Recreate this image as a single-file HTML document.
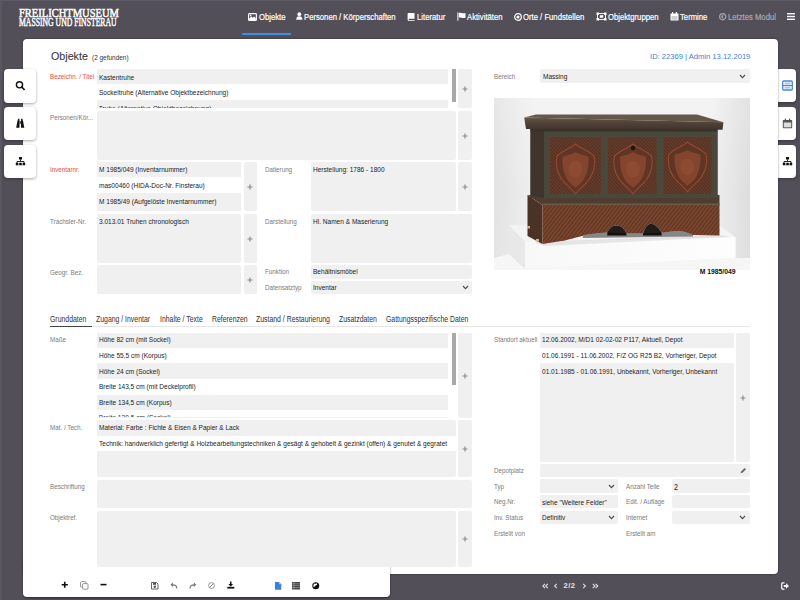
<!DOCTYPE html>
<html><head><meta charset="utf-8"><title>Objekte</title>
<style>
html,body{margin:0;padding:0;}
body{width:800px;height:600px;position:relative;overflow:hidden;background:#524f59;font-family:"Liberation Sans", sans-serif;}
.t{position:absolute;white-space:nowrap;font-family:"Liberation Sans", sans-serif;}
.r{position:absolute;}
svg.r{overflow:visible}
</style></head><body>
<div class="r" style="left:0px;top:0px;width:1.6px;height:600px;background:#5a5761;"></div>
<div class="r" style="left:0px;top:0px;width:800px;height:0.8px;background:#5c5a64;"></div>
<div class="t" style="left:19.3px;top:6.7px;font-family:'Liberation Serif',serif;font-size:12.3px;line-height:12.3px;color:#fff;-webkit-text-stroke:0.5px #fff;transform:scaleX(0.855);transform-origin:0 0;white-space:nowrap">FREILICHTMUSEUM</div>
<div class="t" style="left:19.3px;top:16.4px;font-family:'Liberation Serif',serif;font-size:12.4px;line-height:12.4px;color:#fff;-webkit-text-stroke:0.5px #fff;transform:scaleX(0.622);transform-origin:0 0;white-space:nowrap">MASSING UND FINSTERAU</div>
<div class="t" style="left:258.50px;top:12.63px;font-size:8.47px;line-height:8.47px;color:#fff;font-weight:normal;transform:scaleX(0.9091);transform-origin:0 0;-webkit-text-stroke:0.2px #fff">Objekte</div>
<div class="t" style="left:304.30px;top:12.63px;font-size:8.47px;line-height:8.47px;color:#fff;font-weight:normal;transform:scaleX(0.9091);transform-origin:0 0;-webkit-text-stroke:0.2px #fff">Personen / Körperschaften</div>
<div class="t" style="left:416.50px;top:12.63px;font-size:8.47px;line-height:8.47px;color:#fff;font-weight:normal;transform:scaleX(0.9091);transform-origin:0 0;-webkit-text-stroke:0.2px #fff">Literatur</div>
<div class="t" style="left:466.80px;top:12.63px;font-size:8.47px;line-height:8.47px;color:#fff;font-weight:normal;transform:scaleX(0.9091);transform-origin:0 0;-webkit-text-stroke:0.2px #fff">Aktivitäten</div>
<div class="t" style="left:523.20px;top:12.63px;font-size:8.47px;line-height:8.47px;color:#fff;font-weight:normal;transform:scaleX(0.9091);transform-origin:0 0;-webkit-text-stroke:0.2px #fff">Orte / Fundstellen</div>
<div class="t" style="left:607.80px;top:12.63px;font-size:8.47px;line-height:8.47px;color:#fff;font-weight:normal;transform:scaleX(0.9091);transform-origin:0 0;-webkit-text-stroke:0.2px #fff">Objektgruppen</div>
<div class="t" style="left:679.60px;top:12.63px;font-size:8.47px;line-height:8.47px;color:#fff;font-weight:normal;transform:scaleX(0.9091);transform-origin:0 0;-webkit-text-stroke:0.2px #fff">Termine</div>
<div class="t" style="left:727.90px;top:12.63px;font-size:8.47px;line-height:8.47px;color:#a9a8ad;font-weight:normal;transform:scaleX(0.9091);transform-origin:0 0;-webkit-text-stroke:0.2px #a9a8ad">Letztes Modul</div>
<div class="r" style="left:242px;top:33px;width:49px;height:2px;background:#3d8ee0;"></div>
<svg class="r" style="left:247.5px;top:12.6px;" width="9" height="8" viewBox="0 0 9 8"><rect x="0.6" y="0.6" width="7.8" height="6.9" rx="0.8" fill="#524f59" stroke="#fff" stroke-width="1.1"/><path d="M1.2 7 L1.2 5.5 L3.2 3.3 L4.8 4.8 L6.2 3.6 L7.8 5 L7.8 7 Z" fill="#fff"/><circle cx="2.6" cy="2.4" r="0.8" fill="#fff"/></svg>
<svg class="r" style="left:296px;top:12.3px;" width="7" height="8" viewBox="0 0 7 8"><circle cx="3.3" cy="2.2" r="1.9" fill="#fff"/><path d="M0.2 7.8 C0.2 4.9 1.4 4.2 3.3 4.2 C5.2 4.2 6.4 4.9 6.4 7.8 Z" fill="#fff"/></svg>
<svg class="r" style="left:406.5px;top:12px;" width="8" height="9" viewBox="0 0 8 9"><path d="M1.5 1 H7.5 V6.8 H2.2 C1.4 6.8 1.4 8 2.2 8 H7.5 V8.8 H1.8 C0.8 8.8 0.6 8 0.6 7.5 V2 C0.6 1.4 1 1 1.5 1Z" fill="#fff"/></svg>
<svg class="r" style="left:456.5px;top:12px;" width="9" height="9" viewBox="0 0 9 9"><rect x="0.4" y="0.5" width="1" height="8.3" fill="#fff"/><path d="M1.8 1 C3.5 0 5 2 8.5 1 V5.8 C5 6.8 3.5 4.8 1.8 5.8 Z" fill="#fff"/></svg>
<svg class="r" style="left:514px;top:12.5px;" width="8" height="8" viewBox="0 0 8 8"><circle cx="4" cy="4" r="3.3" fill="none" stroke="#fff" stroke-width="1.2"/><circle cx="4" cy="4" r="1.6" fill="#fff"/></svg>
<svg class="r" style="left:596px;top:12px;" width="11" height="9" viewBox="0 0 11 9"><rect x="0.5" y="0.5" width="2.5" height="2.5" fill="#fff"/><rect x="8" y="0.5" width="2.5" height="2.5" fill="#fff"/><rect x="0.5" y="6" width="2.5" height="2.5" fill="#fff"/><rect x="8" y="6" width="2.5" height="2.5" fill="#fff"/><rect x="1.5" y="1.5" width="8" height="6" fill="none" stroke="#fff" stroke-width="0.9"/><rect x="3.8" y="3.2" width="3.4" height="2.6" fill="#fff"/></svg>
<svg class="r" style="left:669.5px;top:12px;" width="9" height="9" viewBox="0 0 9 9"><rect x="0.5" y="1.5" width="8" height="7" fill="#fff"/><rect x="1.5" y="4" width="6" height="3.8" fill="#cfcfcf"/><rect x="2" y="0" width="1.2" height="2.5" fill="#fff"/><rect x="5.8" y="0" width="1.2" height="2.5" fill="#fff"/></svg>
<svg class="r" style="left:719px;top:12.7px;" width="8" height="8" viewBox="0 0 8 8"><circle cx="3.7" cy="3.7" r="3.1" fill="none" stroke="#a9a8ad" stroke-width="1.2"/><path d="M4.3 2.1 L2.7 3.7 L4.3 5.3" fill="none" stroke="#a9a8ad" stroke-width="1.2"/></svg>
<svg class="r" style="left:786.6px;top:13.2px;" width="8" height="8" viewBox="0 0 8 8"><rect x="0" y="0" width="7.9" height="1.4" fill="#fff"/><rect x="0" y="2.8" width="7.9" height="1.4" fill="#fff"/><rect x="0" y="5.6" width="7.9" height="1.4" fill="#fff"/></svg>
<div class="r" style="left:770px;top:69px;width:26px;height:33px;background:#fff;border-radius:4px;box-shadow:0 1px 3px rgba(0,0,0,0.35)"></div>
<div class="r" style="left:770px;top:107px;width:26px;height:33px;background:#fff;border-radius:4px;box-shadow:0 1px 3px rgba(0,0,0,0.35)"></div>
<div class="r" style="left:770px;top:145px;width:26px;height:33px;background:#fff;border-radius:4px;box-shadow:0 1px 3px rgba(0,0,0,0.35)"></div>
<div class="r" style="left:22.5px;top:39.3px;width:755.7px;height:535.0px;background:#fff;border-radius:4px;box-shadow:0 0 2px rgba(0,0,0,0.5)"></div>
<div class="r" style="left:22.5px;top:560px;width:367.5px;height:36.60000000000002px;background:#fff;border-radius:0 0 4px 4px;box-shadow:0 1px 2px rgba(0,0,0,0.5)"></div>
<div class="r" style="left:22.5px;top:555px;width:367.5px;height:20px;background:#fff;"></div>
<div class="r" style="left:4.2px;top:69px;width:32.199999999999996px;height:33.599999999999994px;background:#fff;border-radius:4px;box-shadow:0 1px 3px rgba(0,0,0,0.35)"></div>
<div class="r" style="left:4.2px;top:106.8px;width:32.199999999999996px;height:33.60000000000001px;background:#fff;border-radius:4px;box-shadow:0 1px 3px rgba(0,0,0,0.35)"></div>
<div class="r" style="left:4.2px;top:144.7px;width:32.199999999999996px;height:33.60000000000002px;background:#fff;border-radius:4px;box-shadow:0 1px 3px rgba(0,0,0,0.35)"></div>
<svg class="r" style="left:15px;top:80px;" width="11" height="11" viewBox="0 0 11 11"><circle cx="4.5" cy="4.8" r="3.1" fill="none" stroke="#111" stroke-width="1.4"/><path d="M6.8 7.1 L9.2 9.5" stroke="#111" stroke-width="1.6" stroke-linecap="round"/></svg>
<svg class="r" style="left:15px;top:118px;" width="11" height="11" viewBox="0 0 11 11"><path d="M1.2 9.8 L4.5 9.8 L4.5 2.3 L2.6 2.3 Z M6 9.8 L9.3 9.8 L7.9 2.3 L6 2.3 Z" fill="#111"/><rect x="2.9" y="0.8" width="1.6" height="1.8" fill="#222"/><rect x="6" y="0.8" width="1.6" height="1.8" fill="#222"/><rect x="4.4" y="3.2" width="1.7" height="2.6" fill="#444"/></svg>
<svg class="r" style="left:15px;top:156px;" width="11" height="11" viewBox="0 0 11 11"><rect x="4" y="1" width="3" height="2.5" fill="#111"/><path d="M5.5 3.5 V5.5 M2 7 V5.5 H9 V7" fill="none" stroke="#111" stroke-width="0.9"/><rect x="0.8" y="6.8" width="2.6" height="2.5" fill="#111"/><rect x="4.2" y="6.8" width="2.6" height="2.5" fill="#111"/><rect x="7.6" y="6.8" width="2.6" height="2.5" fill="#111"/></svg>
<svg class="r" style="left:782px;top:80px;" width="11" height="11" viewBox="0 0 11 11"><rect x="0.7" y="1" width="9.6" height="9" rx="1" fill="none" stroke="#4a86d4" stroke-width="1.3"/><rect x="0.7" y="5" width="9.6" height="1.1" fill="#4a86d4"/><rect x="2.5" y="2.5" width="6" height="2" fill="#a9c6ee"/><rect x="2.5" y="6.6" width="6" height="2" fill="#a9c6ee"/></svg>
<svg class="r" style="left:782px;top:118px;" width="11" height="11" viewBox="0 0 11 11"><rect x="0.8" y="2" width="9.4" height="8.3" rx="0.8" fill="#555"/><rect x="1.8" y="4.5" width="7.4" height="4.8" fill="#ddd"/><rect x="2.8" y="0.5" width="1.2" height="2.6" fill="#555"/><rect x="7" y="0.5" width="1.2" height="2.6" fill="#555"/></svg>
<svg class="r" style="left:782px;top:156px;" width="11" height="11" viewBox="0 0 11 11"><rect x="4" y="1" width="3" height="2.5" fill="#111"/><path d="M5.5 3.5 V5.5 M2 7 V5.5 H9 V7" fill="none" stroke="#111" stroke-width="0.9"/><rect x="0.8" y="6.8" width="2.6" height="2.5" fill="#111"/><rect x="4.2" y="6.8" width="2.6" height="2.5" fill="#111"/><rect x="7.6" y="6.8" width="2.6" height="2.5" fill="#111"/></svg>
<div class="t" style="left:50.60px;top:50.88px;font-size:11.13px;line-height:11.13px;color:#383838;font-weight:normal;transform:scaleX(0.9615);transform-origin:0 0;-webkit-text-stroke:0.1px #383838">Objekte</div>
<div class="t" style="left:91.90px;top:53.90px;font-size:7.68px;line-height:7.68px;color:#333;font-weight:normal;transform:scaleX(0.8403);transform-origin:0 0;">(2 gefunden)</div>
<div class="t" style="right:49.80px;top:53.38px;font-size:8.06px;line-height:8.06px;color:#3d7fd6;font-weight:normal;transform:scaleX(0.9434);transform-origin:100% 0;">ID: 22369 | Admin 13.12.2019</div>
<div class="t" style="left:50.25px;top:72.95px;font-size:7.44px;line-height:7.44px;color:#f0493e;font-weight:normal;transform:scaleX(0.8403);transform-origin:0 0;">Bezeichn. / Titel</div>
<div class="r" style="left:96.5px;top:69px;width:351.5px;height:15px;background:#f0f0f0;"></div>
<div class="r" style="left:96.5px;top:100px;width:351.5px;height:8px;background:#f0f0f0;"></div>
<div class="t" style="left:98.75px;top:73.65px;font-size:7.79px;line-height:7.79px;color:#222222;font-weight:normal;transform:scaleX(0.8403);transform-origin:0 0;">Kastentruhe</div>
<div class="t" style="left:98.75px;top:89.40px;font-size:7.79px;line-height:7.79px;color:#222222;font-weight:normal;transform:scaleX(0.8403);transform-origin:0 0;">Sockeltruhe (Alternative Objektbezeichnung)</div>
<div class="r" style="left:96.5px;top:100px;width:352px;height:8px;overflow:hidden"><div class="t" style="left:2.25px;top:5.6px;font-size:6.6px;line-height:6.6px;color:#333">Truhe (Alternative Objektbezeichnung)</div></div>
<div class="r" style="left:452px;top:69px;width:4px;height:33px;background:#a8a8a8;"></div>
<div class="r" style="left:458px;top:69px;width:14px;height:39px;background:#f0f0f0;border-radius:2px"></div>
<svg class="r" style="left:462px;top:85.5px;" width="6" height="6" viewBox="0 0 6 6"><path d="M3 0.5 V5.5 M0.5 3 H5.5" stroke="#8a8a8a" stroke-width="1.15"/></svg>
<div class="t" style="left:50.25px;top:114.20px;font-size:7.44px;line-height:7.44px;color:#7a7a7a;font-weight:normal;transform:scaleX(0.8403);transform-origin:0 0;">Personen/Kör...</div>
<div class="r" style="left:96.5px;top:110.5px;width:359.5px;height:49.5px;background:#f0f0f0;border-radius:2px"></div>
<div class="r" style="left:458px;top:110.5px;width:14px;height:49.5px;background:#f0f0f0;border-radius:2px"></div>
<svg class="r" style="left:462px;top:132.5px;" width="6" height="6" viewBox="0 0 6 6"><path d="M3 0.5 V5.5 M0.5 3 H5.5" stroke="#8a8a8a" stroke-width="1.15"/></svg>
<div class="t" style="left:50.25px;top:165.90px;font-size:7.44px;line-height:7.44px;color:#f0493e;font-weight:normal;transform:scaleX(0.8403);transform-origin:0 0;">Inventarnr.</div>
<div class="r" style="left:96.5px;top:162px;width:144.5px;height:15px;background:#f0f0f0;"></div>
<div class="r" style="left:96.5px;top:193px;width:144.5px;height:18px;background:#f0f0f0;"></div>
<div class="t" style="left:98.75px;top:166.40px;font-size:7.79px;line-height:7.79px;color:#222222;font-weight:normal;transform:scaleX(0.8403);transform-origin:0 0;">M 1985/049 (Inventarnummer)</div>
<div class="t" style="left:98.75px;top:182.10px;font-size:7.79px;line-height:7.79px;color:#222222;font-weight:normal;transform:scaleX(0.8403);transform-origin:0 0;">mas00460 (HIDA-Doc-Nr. Finsterau)</div>
<div class="t" style="left:98.75px;top:197.80px;font-size:7.79px;line-height:7.79px;color:#222222;font-weight:normal;transform:scaleX(0.8403);transform-origin:0 0;">M 1985/49 (Aufgelöste Inventarnummer)</div>
<div class="r" style="left:243.5px;top:162px;width:13.5px;height:49px;background:#f0f0f0;border-radius:2px"></div>
<svg class="r" style="left:247px;top:183.5px;" width="6" height="6" viewBox="0 0 6 6"><path d="M3 0.5 V5.5 M0.5 3 H5.5" stroke="#8a8a8a" stroke-width="1.15"/></svg>
<div class="t" style="left:50.25px;top:217.70px;font-size:7.44px;line-height:7.44px;color:#7a7a7a;font-weight:normal;transform:scaleX(0.8403);transform-origin:0 0;">Trachsler-Nr.</div>
<div class="r" style="left:96.5px;top:213.75px;width:144.5px;height:49.25px;background:#f0f0f0;border-radius:2px"></div>
<div class="t" style="left:98.75px;top:218.40px;font-size:7.79px;line-height:7.79px;color:#222222;font-weight:normal;transform:scaleX(0.8403);transform-origin:0 0;">3.013.01 Truhen chronologisch</div>
<div class="r" style="left:243.5px;top:213.75px;width:13.5px;height:49.25px;background:#f0f0f0;border-radius:2px"></div>
<svg class="r" style="left:247px;top:235.5px;" width="6" height="6" viewBox="0 0 6 6"><path d="M3 0.5 V5.5 M0.5 3 H5.5" stroke="#8a8a8a" stroke-width="1.15"/></svg>
<div class="t" style="left:50.25px;top:268.70px;font-size:7.44px;line-height:7.44px;color:#7a7a7a;font-weight:normal;transform:scaleX(0.8403);transform-origin:0 0;">Geogr. Bez.</div>
<div class="r" style="left:96.5px;top:265px;width:144.5px;height:29px;background:#f0f0f0;border-radius:2px"></div>
<div class="r" style="left:243.5px;top:265px;width:13.5px;height:29px;background:#f0f0f0;border-radius:2px"></div>
<svg class="r" style="left:247px;top:276.5px;" width="6" height="6" viewBox="0 0 6 6"><path d="M3 0.5 V5.5 M0.5 3 H5.5" stroke="#8a8a8a" stroke-width="1.15"/></svg>
<div class="t" style="left:265.00px;top:166.20px;font-size:7.44px;line-height:7.44px;color:#7a7a7a;font-weight:normal;transform:scaleX(0.8403);transform-origin:0 0;">Datierung</div>
<div class="r" style="left:311px;top:162px;width:145px;height:49px;background:#f0f0f0;border-radius:2px"></div>
<div class="t" style="left:313.40px;top:166.40px;font-size:7.79px;line-height:7.79px;color:#222222;font-weight:normal;transform:scaleX(0.8403);transform-origin:0 0;">Herstellung: 1786 - 1800</div>
<div class="r" style="left:458px;top:162px;width:14px;height:49px;background:#f0f0f0;border-radius:2px"></div>
<svg class="r" style="left:462px;top:183.5px;" width="6" height="6" viewBox="0 0 6 6"><path d="M3 0.5 V5.5 M0.5 3 H5.5" stroke="#8a8a8a" stroke-width="1.15"/></svg>
<div class="t" style="left:265.00px;top:217.70px;font-size:7.44px;line-height:7.44px;color:#7a7a7a;font-weight:normal;transform:scaleX(0.8403);transform-origin:0 0;">Darstellung</div>
<div class="r" style="left:311px;top:213.75px;width:161px;height:49.25px;background:#f0f0f0;border-radius:2px"></div>
<div class="t" style="left:313.40px;top:218.40px;font-size:7.79px;line-height:7.79px;color:#222222;font-weight:normal;transform:scaleX(0.8403);transform-origin:0 0;">Hl. Namen &amp; Maserierung</div>
<div class="t" style="left:265.00px;top:268.20px;font-size:7.44px;line-height:7.44px;color:#7a7a7a;font-weight:normal;transform:scaleX(0.8403);transform-origin:0 0;">Funktion</div>
<div class="r" style="left:311px;top:265px;width:161px;height:13.75px;background:#f0f0f0;border-radius:2px"></div>
<div class="t" style="left:313.40px;top:268.40px;font-size:7.79px;line-height:7.79px;color:#222222;font-weight:normal;transform:scaleX(0.8403);transform-origin:0 0;">Behältnismöbel</div>
<div class="t" style="left:265.00px;top:283.70px;font-size:7.44px;line-height:7.44px;color:#7a7a7a;font-weight:normal;transform:scaleX(0.8403);transform-origin:0 0;">Datensatztyp</div>
<div class="r" style="left:311px;top:281px;width:161px;height:13px;background:#f0f0f0;border-radius:2px"></div>
<div class="t" style="left:313.40px;top:283.90px;font-size:7.79px;line-height:7.79px;color:#222222;font-weight:normal;transform:scaleX(0.8403);transform-origin:0 0;">Inventar</div>
<svg class="r" style="left:461.5px;top:285.0px;" width="7" height="5" viewBox="0 0 7 5"><path d="M1 1 L3.5 3.6 L6 1" fill="none" stroke="#4a4a4a" stroke-width="1.1"/></svg>
<div class="t" style="left:494.00px;top:72.50px;font-size:7.44px;line-height:7.44px;color:#7a7a7a;font-weight:normal;transform:scaleX(0.8403);transform-origin:0 0;">Bereich</div>
<div class="r" style="left:540.3px;top:69px;width:209.70000000000005px;height:13.5px;background:#f0f0f0;border-radius:2px"></div>
<div class="t" style="left:542.50px;top:72.70px;font-size:7.79px;line-height:7.79px;color:#222222;font-weight:normal;transform:scaleX(0.8403);transform-origin:0 0;">Massing</div>
<svg class="r" style="left:739.0px;top:73.5px;" width="7" height="5" viewBox="0 0 7 5"><path d="M1 1 L3.5 3.6 L6 1" fill="none" stroke="#4a4a4a" stroke-width="1.1"/></svg>
<svg class="r" style="left:494px;top:98px" width="256" height="172" viewBox="0 0 256 172">
<defs>
<linearGradient id="pbg" x1="0" y1="0" x2="0" y2="1">
<stop offset="0" stop-color="#f3f3f3"/><stop offset="0.55" stop-color="#eeeeee"/><stop offset="1" stop-color="#f0f0f0"/>
</linearGradient>
<linearGradient id="pbgx" x1="0" y1="0" x2="1" y2="0">
<stop offset="0" stop-color="#000" stop-opacity="0.05"/><stop offset="0.15" stop-color="#000" stop-opacity="0"/><stop offset="0.85" stop-color="#000" stop-opacity="0"/><stop offset="1" stop-color="#000" stop-opacity="0.07"/>
</linearGradient>
<pattern id="streak" width="3" height="3" patternUnits="userSpaceOnUse" patternTransform="rotate(38)">
<rect width="3" height="3" fill="#7c452d"/><rect width="1.1" height="3" fill="#5c3424"/>
</pattern>
<pattern id="streak2" width="2.4" height="2.4" patternUnits="userSpaceOnUse" patternTransform="rotate(-42)">
<rect width="2.4" height="2.4" fill="#653b2b"/><rect width="0.9" height="2.4" fill="#513023"/>
</pattern>
<linearGradient id="lidf" x1="0" y1="0" x2="0" y2="1"><stop offset="0" stop-color="#6b5a4c"/><stop offset="0.35" stop-color="#54453a"/><stop offset="1" stop-color="#3e332b"/></linearGradient>
<linearGradient id="plat" x1="0" y1="0" x2="1" y2="0"><stop offset="0" stop-color="#f8f8f8"/><stop offset="1" stop-color="#fdfdfd"/></linearGradient>
</defs>
<rect width="256" height="172" fill="url(#pbg)"/>
<rect width="256" height="172" fill="url(#pbgx)"/>
<!-- platform -->
<path d="M14.7 127.3 L226 128 L241.6 139 L31 144 Z" fill="#f4f4f4"/>
<path d="M14.7 127.3 L31 144 L31 171 L14.7 156 Z" fill="#e8e8e8"/>
<path d="M31 144 L241.6 139 L241.6 160 L31 171 Z" fill="url(#plat)"/>
<path d="M31 171 L241.6 160 L256 160 L256 172 L0 172 L0 160 L14.7 156 Z" fill="#f6f6f6"/>
<!-- base shadow -->
<path d="M40 144 L225 137 L236 139 L50 148 Z" fill="#000" fill-opacity="0.08"/>
<!-- base side -->
<path d="M33.5 97 L48.5 107 L48.5 146 L33.5 138 Z" fill="#4a3326"/>
<!-- base front -->
<path d="M48.5 106 L225.5 106 L225.5 137.5 L199 137 C193 134 186 132 178 133.6 C173 134 170 135 167.6 134.5 C165 130 161 125.7 157 125.7 C153 125.7 151 130 149 135.4 L132.5 135.4 C130 130 127 127.5 122 127.5 C118 127.5 115 131 113.3 134.5 C105 135 95 136 88.8 137.7 C80 140 70 143 66 143.3 L48.5 146 Z" fill="url(#streak)"/>
<path d="M113.3 134.5 C115 131 118 127.5 122 127.5 C127 127.5 130 130 132.5 135.4 L132.5 137.5 L113.3 137.5 Z M149 135.4 C151 130 153 125.7 157 125.7 C161 125.7 165 130 167.6 134.5 L167.6 137.5 L149 137.5 Z" fill="#221d1a"/><path d="M88.8 137.7 C95 136 105 135 113.3 134.5 L132.5 135.4 L149 135.4 L167.6 134.5 C170 135 173 134 178 133.6 C186 132 193 134 199 137 L199 138.5 L88.8 140 Z" fill="#000" fill-opacity="0.45"/>
<path d="M33.5 97 L225.5 97 L225.5 107 L48.5 107 Z" fill="#4f3e30"/><rect x="48.5" y="105.5" width="177" height="1.5" fill="#6a5a48"/>
<!-- body -->
<rect x="36.5" y="31" width="187" height="69" fill="#463c32"/>
<path d="M36.5 31 L50 33 L50 100 L36.5 97 Z" fill="#3f352c"/>
<rect x="50" y="33" width="173.5" height="67" fill="#49483a"/>
<rect x="56" y="39" width="51" height="57" fill="url(#streak2)"/>
<rect x="114" y="39" width="48.7" height="57" fill="url(#streak2)"/>
<rect x="169.5" y="39" width="48" height="57" fill="url(#streak2)"/>
<!-- ornaments -->
<g>
<path d="M81.5 46 C76 51 69 52 63 58 C61 66 63 76 70 84 C74 88 78 91 81.5 96 C85 91 89 88 93 84 C100 76 102 66 100 58 C94 52 87 51 81.5 46 Z" fill="#5f3526" stroke="#95492c" stroke-width="1.1"/>
<path d="M81.5 54 C77 57 72 57 68.5 59 C68 68 70 78 75 84 C78 87 80 88 81.5 90 C83 88 85 87 88 84 C93 78 95 68 94.5 59 C91 57 86 57 81.5 54 Z" fill="#84442d"/>
<ellipse cx="81.5" cy="71" rx="7" ry="8.5" fill="#8d4b31"/>
</g><g transform="translate(57.5,0)">
<path d="M81.5 46 C76 51 69 52 63 58 C61 66 63 76 70 84 C74 88 78 91 81.5 96 C85 91 89 88 93 84 C100 76 102 66 100 58 C94 52 87 51 81.5 46 Z" fill="#5f3526" stroke="#95492c" stroke-width="1.1"/>
<path d="M81.5 54 C77 57 72 57 68.5 59 C68 68 70 78 75 84 C78 87 80 88 81.5 90 C83 88 85 87 88 84 C93 78 95 68 94.5 59 C91 57 86 57 81.5 54 Z" fill="#84442d"/>
<ellipse cx="81.5" cy="71" rx="7" ry="8.5" fill="#8d4b31"/>
</g><g transform="translate(112,-2)">
<path d="M81.5 46 C76 51 69 52 63 58 C61 66 63 76 70 84 C74 88 78 91 81.5 96 C85 91 89 88 93 84 C100 76 102 66 100 58 C94 52 87 51 81.5 46 Z" fill="#5f3526" stroke="#95492c" stroke-width="1.1"/>
<path d="M81.5 54 C77 57 72 57 68.5 59 C68 68 70 78 75 84 C78 87 80 88 81.5 90 C83 88 85 87 88 84 C93 78 95 68 94.5 59 C91 57 86 57 81.5 54 Z" fill="#84442d"/>
<ellipse cx="81.5" cy="71" rx="7" ry="8.5" fill="#8d4b31"/>
</g>
<circle cx="139" cy="50" r="2.3" fill="#1a1614"/>
<!-- under-lid band -->
<rect x="36.5" y="30.5" width="187" height="3" fill="#3a3129"/>
<!-- lid -->
<path d="M30.2 19.5 L42 16.5 L203 16.5 L229.5 24.2 Z" fill="#66574b"/>
<path d="M30.2 19.5 L229.5 24.2 L228.5 31.8 L32 31 Z" fill="url(#lidf)"/>
<!-- feet -->
<rect x="33" y="128" width="3" height="2.5" fill="#cdb38e"/>
<rect x="42" y="141" width="3" height="2.5" fill="#cdb38e"/>
</svg>

<div class="r" style="left:50px;top:326px;width:700px;height:1px;background:#e6e6e6;"></div>
<div class="r" style="left:50px;top:325.8px;width:42px;height:1.5px;background:#444;"></div>
<div class="t" style="left:50.00px;top:316.05px;font-size:8.21px;line-height:8.21px;color:#333;font-weight:normal;transform:scaleX(0.8403);transform-origin:0 0;">Grunddaten</div>
<div class="t" style="left:96.00px;top:316.05px;font-size:8.21px;line-height:8.21px;color:#333;font-weight:normal;transform:scaleX(0.8403);transform-origin:0 0;">Zugang / Inventar</div>
<div class="t" style="left:159.50px;top:316.05px;font-size:8.21px;line-height:8.21px;color:#333;font-weight:normal;transform:scaleX(0.8403);transform-origin:0 0;">Inhalte / Texte</div>
<div class="t" style="left:212.30px;top:316.05px;font-size:8.21px;line-height:8.21px;color:#333;font-weight:normal;transform:scaleX(0.8403);transform-origin:0 0;">Referenzen</div>
<div class="t" style="left:256.00px;top:316.05px;font-size:8.21px;line-height:8.21px;color:#333;font-weight:normal;transform:scaleX(0.8403);transform-origin:0 0;">Zustand / Restaurierung</div>
<div class="t" style="left:339.30px;top:316.05px;font-size:8.21px;line-height:8.21px;color:#333;font-weight:normal;transform:scaleX(0.8403);transform-origin:0 0;">Zusatzdaten</div>
<div class="t" style="left:386.20px;top:316.05px;font-size:8.21px;line-height:8.21px;color:#333;font-weight:normal;transform:scaleX(0.8403);transform-origin:0 0;">Gattungsspezifische Daten</div>
<div class="t" style="left:50.00px;top:335.70px;font-size:7.44px;line-height:7.44px;color:#7a7a7a;font-weight:normal;transform:scaleX(0.8403);transform-origin:0 0;">Maße</div>
<div class="r" style="left:96.5px;top:332.5px;width:351.5px;height:15.199999999999989px;background:#f0f0f0;"></div>
<div class="t" style="left:98.75px;top:336.30px;font-size:7.79px;line-height:7.79px;color:#222222;font-weight:normal;transform:scaleX(0.8403);transform-origin:0 0;">Höhe 82 cm (mit Sockel)</div>
<div class="t" style="left:98.75px;top:351.90px;font-size:7.79px;line-height:7.79px;color:#222222;font-weight:normal;transform:scaleX(0.8403);transform-origin:0 0;">Höhe 55,5 cm (Korpus)</div>
<div class="r" style="left:96.5px;top:363.3px;width:351.5px;height:15.699999999999989px;background:#f0f0f0;"></div>
<div class="t" style="left:98.75px;top:367.50px;font-size:7.79px;line-height:7.79px;color:#222222;font-weight:normal;transform:scaleX(0.8403);transform-origin:0 0;">Höhe 24 cm (Sockel)</div>
<div class="t" style="left:98.75px;top:383.10px;font-size:7.79px;line-height:7.79px;color:#222222;font-weight:normal;transform:scaleX(0.8403);transform-origin:0 0;">Breite 143,5 cm (mit Deckelprofil)</div>
<div class="r" style="left:96.5px;top:394.7px;width:351.5px;height:15.600000000000023px;background:#f0f0f0;"></div>
<div class="t" style="left:98.75px;top:398.70px;font-size:7.79px;line-height:7.79px;color:#222222;font-weight:normal;transform:scaleX(0.8403);transform-origin:0 0;">Breite 134,5 cm (Korpus)</div>
<div class="r" style="left:96.5px;top:410px;width:352px;height:7px;overflow:hidden"><div class="t" style="left:2.25px;top:4.5px;font-size:6.6px;line-height:6.6px;color:#333">Breite 120,5 cm (Sockel)</div></div>
<div class="r" style="left:96.5px;top:416.5px;width:351.5px;height:0.5px;background:#f0f0f0;"></div>
<div class="r" style="left:452px;top:332.5px;width:4px;height:52.0px;background:#a8a8a8;"></div>
<div class="r" style="left:458px;top:332.5px;width:14px;height:85.0px;background:#f0f0f0;border-radius:2px"></div>
<svg class="r" style="left:461.5px;top:373.3px;" width="6" height="6" viewBox="0 0 6 6"><path d="M3 0.5 V5.5 M0.5 3 H5.5" stroke="#8a8a8a" stroke-width="1.15"/></svg>
<div class="t" style="left:50.00px;top:423.60px;font-size:7.44px;line-height:7.44px;color:#7a7a7a;font-weight:normal;transform:scaleX(0.8403);transform-origin:0 0;">Mat. / Tech.</div>
<div class="r" style="left:96.5px;top:420.4px;width:359.5px;height:15.200000000000045px;background:#f0f0f0;border-radius:2px 2px 0 0"></div>
<div class="r" style="left:96.5px;top:451px;width:359.5px;height:26px;background:#f0f0f0;border-radius:0 0 2px 2px"></div>
<div class="t" style="left:98.60px;top:424.20px;font-size:7.79px;line-height:7.79px;color:#222222;font-weight:normal;transform:scaleX(0.8403);transform-origin:0 0;">Material: Farbe : Fichte &amp; Eisen &amp; Papier &amp; Lack</div>
<div class="t" style="left:98.60px;top:439.90px;font-size:7.79px;line-height:7.79px;color:#222222;font-weight:normal;transform:scaleX(0.8403);transform-origin:0 0;">Technik: handwerklich gefertigt &amp; Holzbearbeitungstechniken &amp; gesägt &amp; gehobelt &amp; gezinkt (offen) &amp; genutet &amp; gegratet</div>
<div class="r" style="left:458px;top:420.4px;width:14px;height:56.60000000000002px;background:#f0f0f0;border-radius:2px"></div>
<svg class="r" style="left:462px;top:445.5px;" width="6" height="6" viewBox="0 0 6 6"><path d="M3 0.5 V5.5 M0.5 3 H5.5" stroke="#8a8a8a" stroke-width="1.15"/></svg>
<div class="t" style="left:50.00px;top:482.80px;font-size:7.44px;line-height:7.44px;color:#7a7a7a;font-weight:normal;transform:scaleX(0.8403);transform-origin:0 0;">Beschriftung</div>
<div class="r" style="left:96.5px;top:479.6px;width:375.5px;height:28.599999999999966px;background:#f0f0f0;border-radius:2px"></div>
<div class="t" style="left:50.00px;top:513.80px;font-size:7.44px;line-height:7.44px;color:#7a7a7a;font-weight:normal;transform:scaleX(0.8403);transform-origin:0 0;">Objektref.</div>
<div class="r" style="left:96.5px;top:510.5px;width:359.5px;height:56.0px;background:#f0f0f0;border-radius:2px"></div>
<div class="r" style="left:458px;top:510.5px;width:14px;height:56.0px;background:#f0f0f0;border-radius:2px"></div>
<svg class="r" style="left:462px;top:535.5px;" width="6" height="6" viewBox="0 0 6 6"><path d="M3 0.5 V5.5 M0.5 3 H5.5" stroke="#8a8a8a" stroke-width="1.15"/></svg>
<div class="t" style="left:494.20px;top:335.90px;font-size:7.44px;line-height:7.44px;color:#7a7a7a;font-weight:normal;transform:scaleX(0.8403);transform-origin:0 0;">Standort aktuell</div>
<div class="r" style="left:540px;top:332.5px;width:194px;height:15.0px;background:#f0f0f0;"></div>
<div class="r" style="left:540px;top:363.3px;width:194px;height:98.39999999999998px;background:#f0f0f0;"></div>
<div class="t" style="left:541.90px;top:336.40px;font-size:7.79px;line-height:7.79px;color:#222222;font-weight:normal;transform:scaleX(0.8403);transform-origin:0 0;">12.06.2002, M/D1 02-02-02 P117, Aktuell, Depot</div>
<div class="t" style="left:541.90px;top:352.10px;font-size:7.79px;line-height:7.79px;color:#222222;font-weight:normal;transform:scaleX(0.8403);transform-origin:0 0;">01.06.1991 - 11.06.2002, F/Z OG R25 B2, Vorheriger, Depot</div>
<div class="t" style="left:541.90px;top:367.90px;font-size:7.79px;line-height:7.79px;color:#222222;font-weight:normal;transform:scaleX(0.8403);transform-origin:0 0;">01.01.1985 - 01.06.1991, Unbekannt, Vorheriger, Unbekannt</div>
<div class="r" style="left:736px;top:332.5px;width:14px;height:129.2px;background:#f0f0f0;border-radius:2px"></div>
<svg class="r" style="left:740px;top:394.5px;" width="6" height="6" viewBox="0 0 6 6"><path d="M3 0.5 V5.5 M0.5 3 H5.5" stroke="#8a8a8a" stroke-width="1.15"/></svg>
<div class="t" style="left:494.00px;top:467.40px;font-size:7.44px;line-height:7.44px;color:#7a7a7a;font-weight:normal;transform:scaleX(0.8403);transform-origin:0 0;">Depotplatz</div>
<div class="r" style="left:540.3px;top:464px;width:209.70000000000005px;height:13.199999999999989px;background:#f0f0f0;border-radius:2px"></div>
<svg class="r" style="left:739.5px;top:466.8px;" width="7" height="7" viewBox="0 0 7 7"><path d="M0.6 6.2 L1.1 4.4 L4.6 0.9 L6 2.3 L2.5 5.8 Z" fill="#666"/></svg>
<div class="t" style="left:494.00px;top:483.00px;font-size:7.44px;line-height:7.44px;color:#7a7a7a;font-weight:normal;transform:scaleX(0.8403);transform-origin:0 0;">Typ</div>
<div class="t" style="left:494.00px;top:498.40px;font-size:7.44px;line-height:7.44px;color:#7a7a7a;font-weight:normal;transform:scaleX(0.8403);transform-origin:0 0;">Neg.Nr.</div>
<div class="t" style="left:494.00px;top:513.90px;font-size:7.44px;line-height:7.44px;color:#7a7a7a;font-weight:normal;transform:scaleX(0.8403);transform-origin:0 0;">Inv. Status</div>
<div class="t" style="left:494.00px;top:529.50px;font-size:7.44px;line-height:7.44px;color:#7a7a7a;font-weight:normal;transform:scaleX(0.8403);transform-origin:0 0;">Erstellt von</div>
<div class="r" style="left:540.3px;top:479.4px;width:77.90000000000009px;height:13.200000000000045px;background:#f0f0f0;border-radius:2px"></div>
<div class="r" style="left:671.7px;top:479.4px;width:78.29999999999995px;height:13.200000000000045px;background:#f0f0f0;border-radius:2px"></div>
<div class="r" style="left:540.3px;top:495px;width:77.90000000000009px;height:13.199999999999989px;background:#f0f0f0;border-radius:2px"></div>
<div class="r" style="left:671.7px;top:495px;width:78.29999999999995px;height:13.199999999999989px;background:#f0f0f0;border-radius:2px"></div>
<div class="r" style="left:540.3px;top:510.7px;width:77.90000000000009px;height:13.199999999999989px;background:#f0f0f0;border-radius:2px"></div>
<div class="r" style="left:671.7px;top:510.7px;width:78.29999999999995px;height:13.199999999999989px;background:#f0f0f0;border-radius:2px"></div>
<svg class="r" style="left:607.5px;top:483.5px;" width="7" height="5" viewBox="0 0 7 5"><path d="M1 1 L3.5 3.6 L6 1" fill="none" stroke="#4a4a4a" stroke-width="1.1"/></svg>
<svg class="r" style="left:607.5px;top:514.8px;" width="7" height="5" viewBox="0 0 7 5"><path d="M1 1 L3.5 3.6 L6 1" fill="none" stroke="#4a4a4a" stroke-width="1.1"/></svg>
<svg class="r" style="left:739.0px;top:514.8px;" width="7" height="5" viewBox="0 0 7 5"><path d="M1 1 L3.5 3.6 L6 1" fill="none" stroke="#4a4a4a" stroke-width="1.1"/></svg>
<div class="t" style="left:541.90px;top:498.50px;font-size:7.79px;line-height:7.79px;color:#222222;font-weight:normal;transform:scaleX(0.8403);transform-origin:0 0;">siehe &quot;Weitere Felder&quot;</div>
<div class="t" style="left:541.90px;top:513.90px;font-size:7.79px;line-height:7.79px;color:#222222;font-weight:normal;transform:scaleX(0.8403);transform-origin:0 0;">Definitiv</div>
<div class="t" style="left:625.60px;top:483.00px;font-size:7.44px;line-height:7.44px;color:#7a7a7a;font-weight:normal;transform:scaleX(0.8403);transform-origin:0 0;">Anzahl Teile</div>
<div class="t" style="left:625.60px;top:498.40px;font-size:7.44px;line-height:7.44px;color:#7a7a7a;font-weight:normal;transform:scaleX(0.8403);transform-origin:0 0;">Edit. / Auflage</div>
<div class="t" style="left:625.60px;top:513.90px;font-size:7.44px;line-height:7.44px;color:#7a7a7a;font-weight:normal;transform:scaleX(0.8403);transform-origin:0 0;">Internet</div>
<div class="t" style="left:625.60px;top:529.50px;font-size:7.44px;line-height:7.44px;color:#7a7a7a;font-weight:normal;transform:scaleX(0.8403);transform-origin:0 0;">Erstellt am</div>
<div class="t" style="left:673.80px;top:482.55px;font-size:8.57px;line-height:8.57px;color:#222222;font-weight:normal;transform:scaleX(0.8403);transform-origin:0 0;">2</div>
<svg class="r" style="left:61px;top:581px;" width="8" height="8" viewBox="0 0 8 8"><path d="M3.75 0.7 V6.8 M0.7 3.75 H6.8" stroke="#111" stroke-width="1.6"/></svg>
<svg class="r" style="left:80px;top:580.5px;" width="9" height="9" viewBox="0 0 9 9"><rect x="0.6" y="0.6" width="5.2" height="5.6" rx="1" fill="#fff" stroke="#888" stroke-width="0.9"/><rect x="2.6" y="2.6" width="5.4" height="5.6" rx="1" fill="#fff" stroke="#888" stroke-width="0.9"/></svg>
<svg class="r" style="left:99.5px;top:583px;" width="7" height="3" viewBox="0 0 7 3"><rect x="0.5" y="0.8" width="6" height="1.6" fill="#111"/></svg>
<svg class="r" style="left:151px;top:581.5px;" width="7.5" height="7.5" viewBox="0 0 7.5 7.5"><path d="M0.5 0.5 H5.5 L7 2 V7 H0.5 Z" fill="none" stroke="#555" stroke-width="0.9"/><rect x="2" y="0.8" width="3" height="2" fill="#555"/><circle cx="3.8" cy="4.8" r="1.2" fill="#555"/></svg>
<svg class="r" style="left:170px;top:582px;" width="8" height="7" viewBox="0 0 8 7"><path d="M6.8 6.5 C6.8 3.5 5 2.8 2.5 2.8" fill="none" stroke="#777" stroke-width="1.2"/><path d="M3 0.5 L0.5 2.8 L3 5 Z" fill="#777"/></svg>
<svg class="r" style="left:188.5px;top:582px;" width="8" height="7" viewBox="0 0 8 7"><path d="M1 6.5 C1 3.5 2.8 2.8 5.3 2.8" fill="none" stroke="#777" stroke-width="1.2"/><path d="M4.8 0.5 L7.3 2.8 L4.8 5 Z" fill="#777"/></svg>
<svg class="r" style="left:208px;top:582px;" width="7" height="7" viewBox="0 0 7 7"><circle cx="3.5" cy="3.5" r="2.9" fill="none" stroke="#888" stroke-width="0.9"/><path d="M1.5 5.5 L5.5 1.5" stroke="#888" stroke-width="0.9"/></svg>
<svg class="r" style="left:227px;top:581px;" width="7.5" height="8" viewBox="0 0 7.5 8"><path d="M3.75 0.5 V4" stroke="#111" stroke-width="1.5"/><path d="M1.3 3 L3.75 5.5 L6.2 3 Z" fill="#111"/><rect x="0.3" y="5.8" width="7" height="1.8" fill="#111"/></svg>
<svg class="r" style="left:275px;top:581.5px;" width="6.5" height="8" viewBox="0 0 6.5 8"><path d="M0 0 H4 L6.2 2.2 V7.8 H0 Z" fill="#3a7fdb"/><path d="M4 0 V2.2 H6.2" fill="#9cc0ef"/></svg>
<svg class="r" style="left:292px;top:582px;" width="8" height="7.5" viewBox="0 0 8 7.5"><rect x="0" y="0" width="8" height="7.5" fill="#444"/><path d="M0 1.8 H8 M0 3.7 H8 M0 5.6 H8 M2 0 V7.5" stroke="#bbb" stroke-width="0.5"/></svg>
<svg class="r" style="left:311.5px;top:582px;" width="7.5" height="7.5" viewBox="0 0 7.5 7.5"><circle cx="3.75" cy="3.75" r="3.5" fill="#111"/><path d="M2 1.5 C3 2 4 1.8 5 1.2 C5.5 2.5 4.5 3.5 3.5 3.5 C2.8 4.5 2.2 5.5 1.2 4.5 Z" fill="#fff"/></svg>
<div class="t" style="left:563.50px;top:581.97px;font-size:7.60px;line-height:7.60px;color:#e6e6e6;font-weight:bold;transform:scaleX(1.0000);transform-origin:0 0;letter-spacing:0.5px">2/2</div>
<div class="t" style="right:64.50px;top:268.20px;font-size:7.68px;line-height:7.68px;color:#111;font-weight:bold;transform:scaleX(0.8850);transform-origin:100% 0;">M 1985/049</div>
<svg class="r" style="left:542px;top:582.5px;" width="6.5" height="6" viewBox="0 0 6.5 6"><path d="M3 0.8 L0.8 3 L3 5.2 M5.8 0.8 L3.6 3 L5.8 5.2" fill="none" stroke="#ddd" stroke-width="1.1"/></svg>
<svg class="r" style="left:553px;top:582.5px;" width="5" height="6" viewBox="0 0 5 6"><path d="M3.8 0.8 L1.6 3 L3.8 5.2" fill="none" stroke="#ddd" stroke-width="1.1"/></svg>
<svg class="r" style="left:582px;top:582.5px;" width="5" height="6" viewBox="0 0 5 6"><path d="M1.2 0.8 L3.4 3 L1.2 5.2" fill="none" stroke="#ddd" stroke-width="1.1"/></svg>
<svg class="r" style="left:592px;top:582.5px;" width="6.5" height="6" viewBox="0 0 6.5 6"><path d="M0.8 0.8 L3 3 L0.8 5.2 M3.6 0.8 L5.8 3 L3.6 5.2" fill="none" stroke="#ddd" stroke-width="1.1"/></svg>
<svg class="r" style="left:780.5px;top:581.5px;" width="8.5" height="8" viewBox="0 0 8.5 8"><path d="M3.5 0.8 H1.8 C1 0.8 0.7 1.3 0.7 2 V6 C0.7 6.7 1 7.2 1.8 7.2 H3.5" fill="none" stroke="#fff" stroke-width="1.2"/><path d="M2.8 3 H5 V1.2 L8 4 L5 6.8 V5 H2.8 Z" fill="#fff"/></svg>
</body></html>
